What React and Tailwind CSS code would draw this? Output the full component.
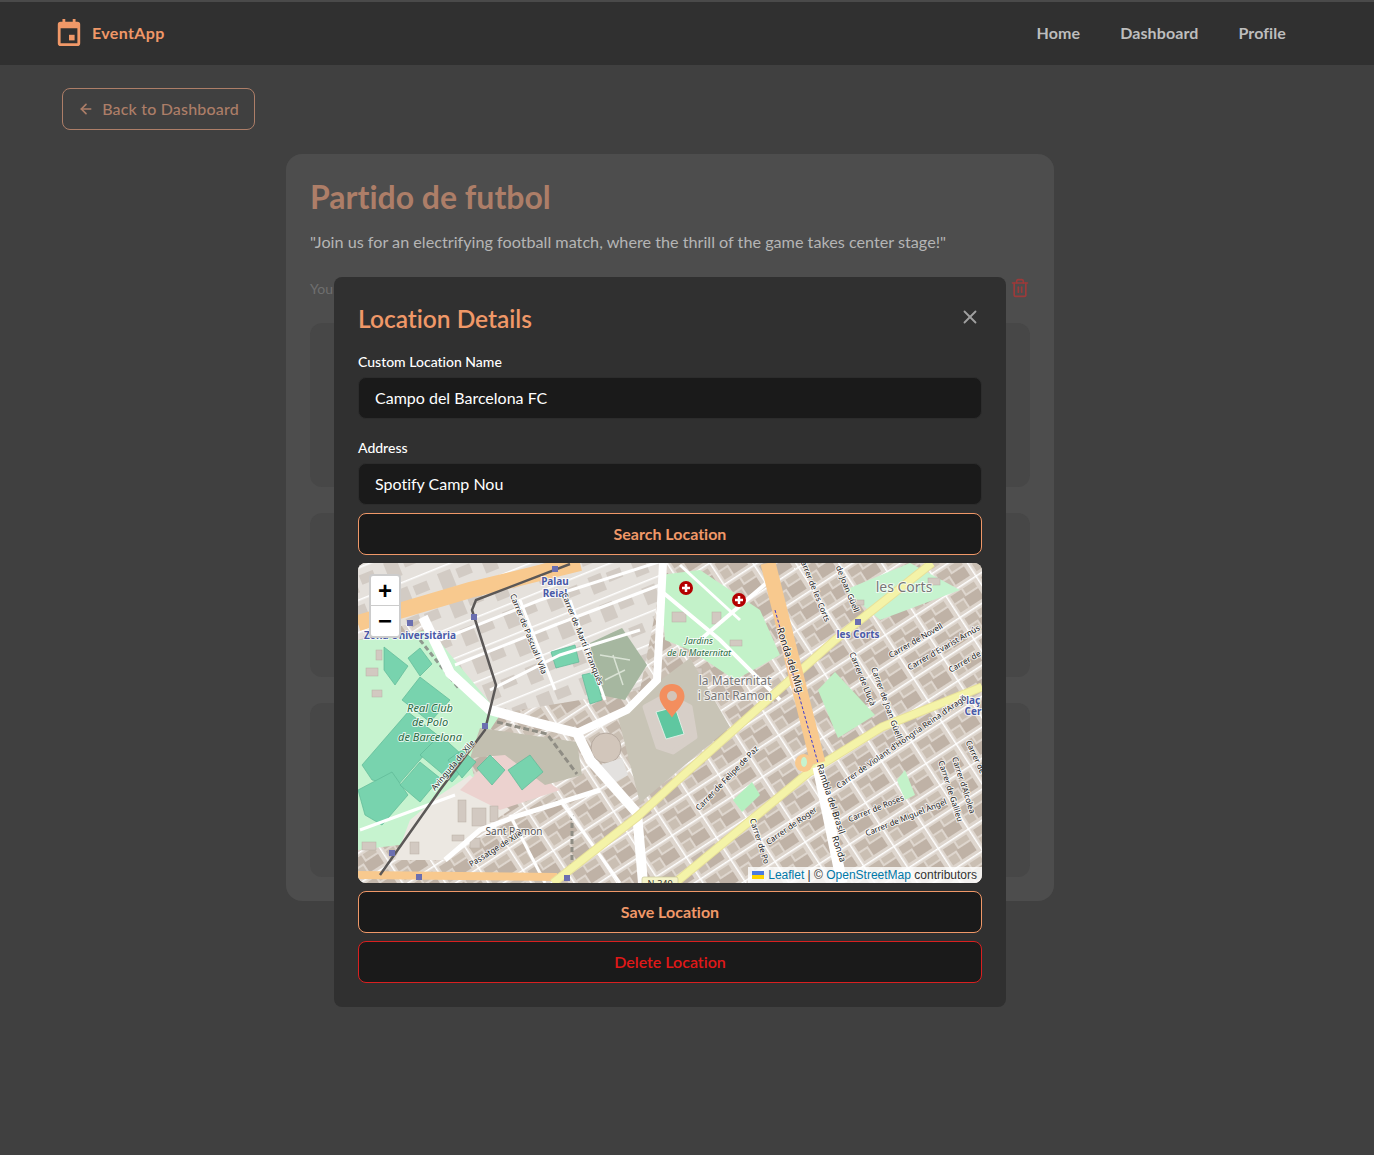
import React from 'react';
import { ArrowLeft, X, Trash2 } from 'lucide-react';

const labels = [
  { t: 'Palau', x: 555, y: 585, s: 10, c: '#4a5aa8', b: 1 },
  { t: 'Reial', x: 555, y: 597, s: 10, c: '#4a5aa8', b: 1 },
  { t: 'Zona Universitària', x: 410, y: 639, s: 10, c: '#4a5aa8', b: 1 },
  { t: 'les Corts', x: 858, y: 638, s: 10, c: '#4a5aa8', b: 1 },
  { t: 'les Corts', x: 904, y: 592, s: 14, c: '#777' },
  { t: 'la Maternitat', x: 735, y: 685, s: 12, c: '#777' },
  { t: 'i Sant Ramon', x: 735, y: 700, s: 12, c: '#777' },
  { t: 'Sant Ramon', x: 514, y: 835, s: 10, c: '#555' },
  { t: 'Real Club', x: 430, y: 712, s: 11, c: '#2c6b45', i: 1 },
  { t: 'de Polo', x: 430, y: 726, s: 11, c: '#2c6b45', i: 1 },
  { t: 'de Barcelona', x: 430, y: 741, s: 11, c: '#2c6b45', i: 1 },
  { t: 'Jardins', x: 699, y: 644, s: 9, c: '#2c6b45', i: 1 },
  { t: 'de la Maternitat', x: 699, y: 656, s: 9, c: '#2c6b45', i: 1 },
  { t: 'Plaç', x: 970, y: 704, s: 10, c: '#4a5aa8', b: 1 },
  { t: 'Cer', x: 973, y: 715, s: 10, c: '#4a5aa8', b: 1 },
  { t: 'Carrer de Pascual i Vila', x: 526, y: 635, s: 8, r: 68 },
  { t: 'Carrer de Martí i Franquès', x: 580, y: 640, s: 8, r: 68 },
  { t: 'Avinguda de Xile', x: 455, y: 767, s: 8, r: -50 },
  { t: 'Passatge de Xile', x: 497, y: 851, s: 8, r: -32 },
  { t: 'Ronda del Mig', x: 787, y: 661, s: 10, r: 72 },
  { t: 'Rambla del Brasil', x: 828, y: 800, s: 9, r: 72 },
  { t: 'Ronda', x: 836, y: 850, s: 9, r: 72 },
  { t: 'Carrer de les Corts', x: 812, y: 590, s: 8, r: 68 },
  { t: 'de Joan Güell', x: 845, y: 590, s: 8, r: 68 },
  { t: 'Carrer de Lluçà', x: 860, y: 680, s: 8, r: 68 },
  { t: 'Carrer de Joan Güell', x: 884, y: 704, s: 8, r: 70 },
  { t: 'Carrer de Novell', x: 917, y: 643, s: 8, r: -30 },
  { t: "Carrer d'Evarist Arnús", x: 945, y: 650, s: 8, r: -30 },
  { t: 'Carrer de', x: 966, y: 664, s: 8, r: -30 },
  { t: "Carrer de Violant d'Hongria Reina d'Aragó", x: 903, y: 744, s: 8, r: -35 },
  { t: 'Carrer de Felipe de Paz', x: 729, y: 780, s: 8, r: -46 },
  { t: 'Carrer de Roses', x: 877, y: 811, s: 8, r: -22 },
  { t: 'Carrer de Miguel Àngel', x: 907, y: 820, s: 8, r: -22 },
  { t: 'Carrer de Roger', x: 793, y: 828, s: 8, r: -35 },
  { t: 'Carrer de Po', x: 757, y: 842, s: 8, r: 72 },
  { t: 'Carrer de Galileu', x: 948, y: 792, s: 8, r: 72 },
  { t: "Carrer d'Alcolea", x: 961, y: 786, s: 8, r: 72 },
  { t: 'Carrer de', x: 973, y: 758, s: 8, r: 65 },
];

const pitches = [
  '384,647 408,666 395,685 384,670',
  '408,658 420,648 432,664 420,676',
  '420,677 450,700 430,722 402,700',
  '362,765 408,712 440,737 398,785 372,780',
  '420,755 440,735 470,762 452,782',
  '365,815 358,790 392,772 408,795 382,825',
  '400,785 420,762 440,778 420,802',
  '448,760 462,750 476,762 462,778',
  '477,768 490,755 505,770 492,785',
  '508,770 530,755 543,772 522,790',
  '582,675 595,672 602,700 590,704',
  '551,652 575,645 579,662 556,668',
];

// small buildings on the green and campus areas
const huts = [
  [366, 668, 12, 8], [372, 690, 10, 7], [376, 650, 6, 10], [458, 800, 8, 22], [472, 808, 14, 18],
  [490, 806, 8, 16], [452, 835, 12, 6], [470, 838, 10, 10], [362, 842, 14, 8], [410, 842, 9, 12],
  [672, 612, 14, 10], [712, 612, 9, 12], [730, 640, 12, 6], [692, 668, 10, 6], [856, 600, 8, 5],
  [928, 578, 12, 7], [606, 774, 10, 6],
];

const whiteRoads = [
  ['423,617 450,673 490,710 537,723 577,733 590,760 637,813 643,883', 10],
  ['577,733 627,710 657,680 663,563', 8],
  ['490,690 560,655 640,630', 3],
  ['455,665 555,625 660,585', 3],
  ['440,640 540,600 665,560', 3],
  ['520,600 555,690', 3],
  ['570,600 605,700', 3],
  ['660,590 720,640 780,700', 4],
  ['680,565 740,620', 3],
  ['700,640 770,580', 4],
  ['445,860 480,830 520,815 600,790', 5],
  ['510,815 545,883', 3],
  ['455,795 360,830', 3],
  ['560,800 620,883', 3],
];

const App = () => {
  return (
    <div className="relative min-h-[1155px] bg-[#404040] font-['Lato',sans-serif] [font-variant-ligatures:none] text-white">
      <header className="flex h-[65px] items-center border-t-2 border-[#4a4a4a] bg-[#303030] pb-[2px] pl-[56px] pr-[88px]">
        <svg width="26" height="28" viewBox="0 0 26 30" fill="#f09868" className="mr-[10px] mt-[-2px]">
          <path d="M6 1h3v3h8V1h3v3h2a3 3 0 0 1 3 3v20a3 3 0 0 1-3 3H4a3 3 0 0 1-3-3V7a3 3 0 0 1 3-3h2zM4 11v16h18V11z" />
          <rect x="13" y="18" width="6" height="6" />
        </svg>
        <span className="text-[16px] font-bold tracking-[0.35px] text-[#f09868]">EventApp</span>
        <nav className="ml-auto flex gap-10 text-[16px] font-bold tracking-[0.1px] text-[#bdbdbd]">
          <span>Home</span>
          <span>Dashboard</span>
          <span>Profile</span>
        </nav>
      </header>

      <div className="w-[1340px]">
        <div className="px-[62px] pt-[23px]">
          <button className="flex h-[42px] w-[193px] items-center justify-center gap-[8px] rounded-lg border border-[#ad7e68] text-[16px] font-medium tracking-[0.18px] text-[#ad7e68]">
            <ArrowLeft size={16} strokeWidth={2.5} />
            Back to Dashboard
          </button>
        </div>

        <main className="mx-auto mt-6 h-[747px] w-[768px] rounded-2xl bg-[#4d4d4d] p-6">
          <h1 className="text-[32px] leading-[38px] font-bold text-[#ad7e68]">Partido de futbol</h1>
          <p className="mt-[14px] text-[16.2px] leading-6 text-[#b5b5b5]">
            "Join us for an electrifying football match, where the thrill of the game takes center stage!"
          </p>
          <div className="mt-[22px] flex h-6 items-center justify-between">
            <span className="text-[14px] text-[#6f6f6f]">You</span>
            <Trash2 size={20} className="text-[#9c3a3a]" />
          </div>
          <div className="mt-[23px] flex flex-col gap-[26px]">
            <div className="h-[164px] rounded-xl bg-[#474747]" />
            <div className="h-[164px] rounded-xl bg-[#474747]" />
            <div className="h-[174px] rounded-xl bg-[#474747]" />
          </div>
        </main>
      </div>

      <div className="absolute inset-0 flex justify-center pr-[34px] pt-[277px]">
        <div className="h-[730px] w-[672px] rounded-lg bg-[#303030] p-6">
          <div className="flex items-center justify-between pt-[2px]">
            <h2 className="text-[24.5px] leading-[32px] font-semibold text-[#f09868]">Location Details</h2>
            <X size={22} className="mr-[1px] mt-[-4px] text-[#a0a0a0]" />
          </div>
          <label className="mt-[17px] block text-[14px] leading-5 font-medium">Custom Location Name</label>
          <div className="mt-[5px] flex h-[42px] items-center rounded-lg border border-[#2c2c2c] bg-[#1a1a1a] px-4 text-[16px]">
            Campo del Barcelona FC
          </div>
          <label className="mt-[19px] block text-[14px] leading-5 font-medium">Address</label>
          <div className="mt-[5px] flex h-[42px] items-center rounded-lg border border-[#2c2c2c] bg-[#1a1a1a] px-4 text-[16px]">
            Spotify Camp Nou
          </div>
          <button className="mt-2 h-[42px] w-full rounded-lg border border-[#f09868] bg-[#1a1a1a] text-[16px] font-bold text-[#f09868]">
            Search Location
          </button>

          <div className="relative mt-2 h-[320px] overflow-hidden rounded-lg bg-[#e4dfd9]">
            <svg viewBox="358 563 624 320" className="block h-full w-full">
              <defs>
                <pattern id="blocksA" width="36" height="26" patternUnits="userSpaceOnUse" patternTransform="rotate(-33)">
                  <rect width="36" height="26" fill="#ded6ce" />
                  <rect x="4" y="4" width="13" height="8" fill="#c4b8ac" />
                  <rect x="19" y="4" width="13" height="6" fill="#cabfb3" />
                  <rect x="4" y="14" width="9" height="9" fill="#cabfb3" />
                  <rect x="15" y="12" width="17" height="11" fill="#bfb2a6" />
                  <path d="M0 0h36M0 0v26" stroke="#ffffff" strokeWidth="3" />
                </pattern>
                <pattern id="blocksB" width="46" height="30" patternUnits="userSpaceOnUse" patternTransform="rotate(-22)">
                  <rect width="46" height="30" fill="#e5e1dc" />
                  <rect x="6" y="6" width="14" height="18" fill="#d2cbc4" />
                  <rect x="25" y="8" width="15" height="10" fill="#d2cbc4" />
                  <path d="M0 0h46" stroke="#ffffff" strokeWidth="3" />
                </pattern>
              </defs>

              <rect x="358" y="563" width="624" height="320" fill="url(#blocksA)" />
              <polygon points="358,563 665,563 640,690 490,715 420,620 358,640" fill="url(#blocksB)" />

              {/* parks and sports grounds */}
              <polygon points="358,640 430,630 500,715 470,760 480,800 440,840 358,850" fill="#c6f3cf" />
              <polygon points="660,575 700,570 760,610 780,655 735,680 690,650 665,640" fill="#c3f2c9" />
              <polygon points="440,795 470,775 510,810 480,830 445,860 395,860 410,820" fill="#ece8e2" />
              <polygon points="460,790 500,750 560,790 500,810" fill="#ecd2cf" />
              <polygon points="590,643 622,628 647,665 625,700 600,695" fill="#a6b7a0" />
              <path d="M600 655l30 5M613 655l10 30M605 680l20 -10" stroke="#d9e2d4" strokeWidth="1.5" fill="none" />
              <polygon points="845,590 910,563 960,590 880,620" fill="#c6f3cf" />
              <polygon points="818,690 835,672 875,715 838,738" fill="#c0f0c5" />
              <polygon points="733,800 752,782 760,795 742,812" fill="#b5f0c0" />
              <polygon points="897,780 905,770 915,795 905,800" fill="#c3f2c9" />
              <polygon points="480,728 577,742 582,775 545,785 505,755 470,758" fill="#c2bfb0" />
              <path d="M497 722l50 12 30 40" stroke="#8f8d84" strokeWidth="3" strokeDasharray="6 3" fill="none" />
              <path d="M420 640l40 50" stroke="#8f9a8f" strokeWidth="3" strokeDasharray="5 3" fill="none" />
              <path d="M572 815v50" stroke="#8f8d84" strokeWidth="3" strokeDasharray="5 3" fill="none" />
              {pitches.map((p, i) => (
                <polygon key={i} points={p} fill="#78d3ae" stroke="#5fb897" strokeWidth="0.7" />
              ))}
              {huts.map(([x, y, w, h], i) => (
                <rect key={i} x={x} y={y} width={w} height={h} fill="#d2c9c1" stroke="#b9aea4" strokeWidth="0.5" />
              ))}

              {/* stadium */}
              <polygon points="617,713 690,658 730,727 640,803" fill="#c8c4b6" />
              <circle cx="606" cy="748" r="15" fill="#d2c6bb" stroke="#b5a99f" />
              <polygon points="600,765 622,758 628,775 610,785" fill="#e3e1df" />
              <polygon points="645,707 667,695 690,707 695,737 673,752 658,747" fill="#d7cfc8" stroke="#d7cfc8" strokeWidth="5" strokeLinejoin="round" />
              <polygon points="656,712 675,707 684,734 666,739" fill="#5fc7a0" stroke="#e8f5ee" strokeWidth="0.8" />

              {/* roads */}
              {whiteRoads.map(([p, w], i) => (
                <polyline key={i} points={p} fill="none" stroke="#ffffff" strokeWidth={w} />
              ))}
              <polyline points="358,623 470,590 580,563" fill="none" stroke="#f8c98e" strokeWidth="16" />
              <polyline points="358,875 557,877" fill="none" stroke="#f8c98e" strokeWidth="8" />
              <polyline points="553,883 637,817 670,787 782,687 835,640 932,563" fill="none" stroke="#e8e19a" strokeWidth="9" />
              <polyline points="553,883 637,817 670,787 782,687 835,640 932,563" fill="none" stroke="#f4f3a8" strokeWidth="7" />
              <polyline points="675,883 808,773 882,727 982,687" fill="none" stroke="#e8e19a" strokeWidth="9" />
              <polyline points="675,883 808,773 882,727 982,687" fill="none" stroke="#f4f3a8" strokeWidth="7" />
              <polyline points="818,767 842,883" fill="none" stroke="#ffffff" strokeWidth="11" />
              <polyline points="768,563 818,763" fill="none" stroke="#f8c98e" strokeWidth="15" />
              <polyline points="775,610 818,763" fill="none" stroke="#3a3ad0" strokeWidth="1" strokeDasharray="3 2" />
              <circle cx="804" cy="763" r="9" fill="#f8c98e" />
              <ellipse cx="804" cy="762" rx="3" ry="5" fill="#c6f3cf" />
              <polyline points="570,564 476,600 472,610 496,685 485,730 440,790 380,875" fill="none" stroke="#5b5857" strokeWidth="2.5" />

              {/* stops */}
              {[[555, 569], [474, 617], [410, 623], [485, 726], [392, 853], [419, 877], [567, 878], [858, 622]].map(([x, y], i) => (
                <rect key={i} x={x - 3} y={y - 3} width="6" height="6" fill="#6b6fb0" />
              ))}

              {/* hospitals */}
              {[[686, 588], [739, 600]].map(([x, y], i) => (
                <g key={i}>
                  <circle cx={x} cy={y} r="7" fill="#b30000" />
                  <path d={`M${x - 4} ${y}h8M${x} ${y - 4}v8`} stroke="#ffffff" strokeWidth="2.5" />
                </g>
              ))}

              {labels.map((l, i) => (
                <text
                  key={i}
                  x={l.x}
                  y={l.y}
                  fontSize={l.s}
                  fontWeight={l.b ? 700 : 400}
                  fontStyle={l.i ? 'italic' : 'normal'}
                  fill={l.c || '#222222'}
                  stroke="#ffffff"
                  strokeWidth="2"
                  strokeOpacity="0.75"
                  paintOrder="stroke"
                  textAnchor="middle"
                  fontFamily="'Noto Sans', sans-serif"
                  transform={l.r ? `rotate(${l.r} ${l.x} ${l.y})` : undefined}
                >
                  {l.t}
                </text>
              ))}

              {/* road shield, cut by the map edge */}
              <rect x="642" y="877" width="36" height="12" rx="2" fill="#f4f3c8" stroke="#c9c79a" strokeWidth="0.7" />
              <text x="660" y="887" fontSize="9" textAnchor="middle" fill="#333333" fontFamily="'Noto Sans', sans-serif">N-340</text>

              {/* marker */}
              <path d="M672 684c-7.500 0-12.500 5.500-12.500 12.500 0 7 7 13 12.500 21 5.500-8 12.500-14 12.500-21 0-7-5-12.500-12.500-12.500z" fill="#f38e5e" />
              <circle cx="672" cy="696" r="5" fill="#d3c4b8" />
            </svg>

            <div className="absolute left-[11px] top-[11px] w-[32px] overflow-hidden rounded border-2 border-black/20 bg-white font-['Liberation_Sans',sans-serif] text-black">
              <div className="flex h-[30px] items-center justify-center border-b border-[#cccccc] text-[24px] font-bold">+</div>
              <div className="flex h-[30px] items-center justify-center text-[24px] font-bold">−</div>
            </div>

            <div className="absolute bottom-0 right-0 flex h-[16px] items-center gap-1 bg-white/80 pl-1 pr-[5px] font-['Liberation_Sans',sans-serif] text-[12px] leading-none text-[#333333]">
              <svg width="12" height="8" viewBox="0 0 12 8">
                <rect width="12" height="4" fill="#4c7be1" />
                <rect y="4" width="12" height="4" fill="#ffd500" />
              </svg>
              <span>
                <span className="text-[#0078a8]">Leaflet</span> | © <span className="text-[#0078a8]">OpenStreetMap</span> contributors
              </span>
            </div>
          </div>

          <button className="mt-2 h-[42px] w-full rounded-lg border border-[#f09868] bg-[#1a1a1a] text-[16px] font-bold text-[#f09868]">
            Save Location
          </button>
          <button className="mt-2 h-[42px] w-full rounded-lg border border-[#d92020] bg-[#1a1a1a] text-[16px] font-semibold text-[#e01818]">
            Delete Location
          </button>
        </div>
      </div>
    </div>
  );
};

export default App;
